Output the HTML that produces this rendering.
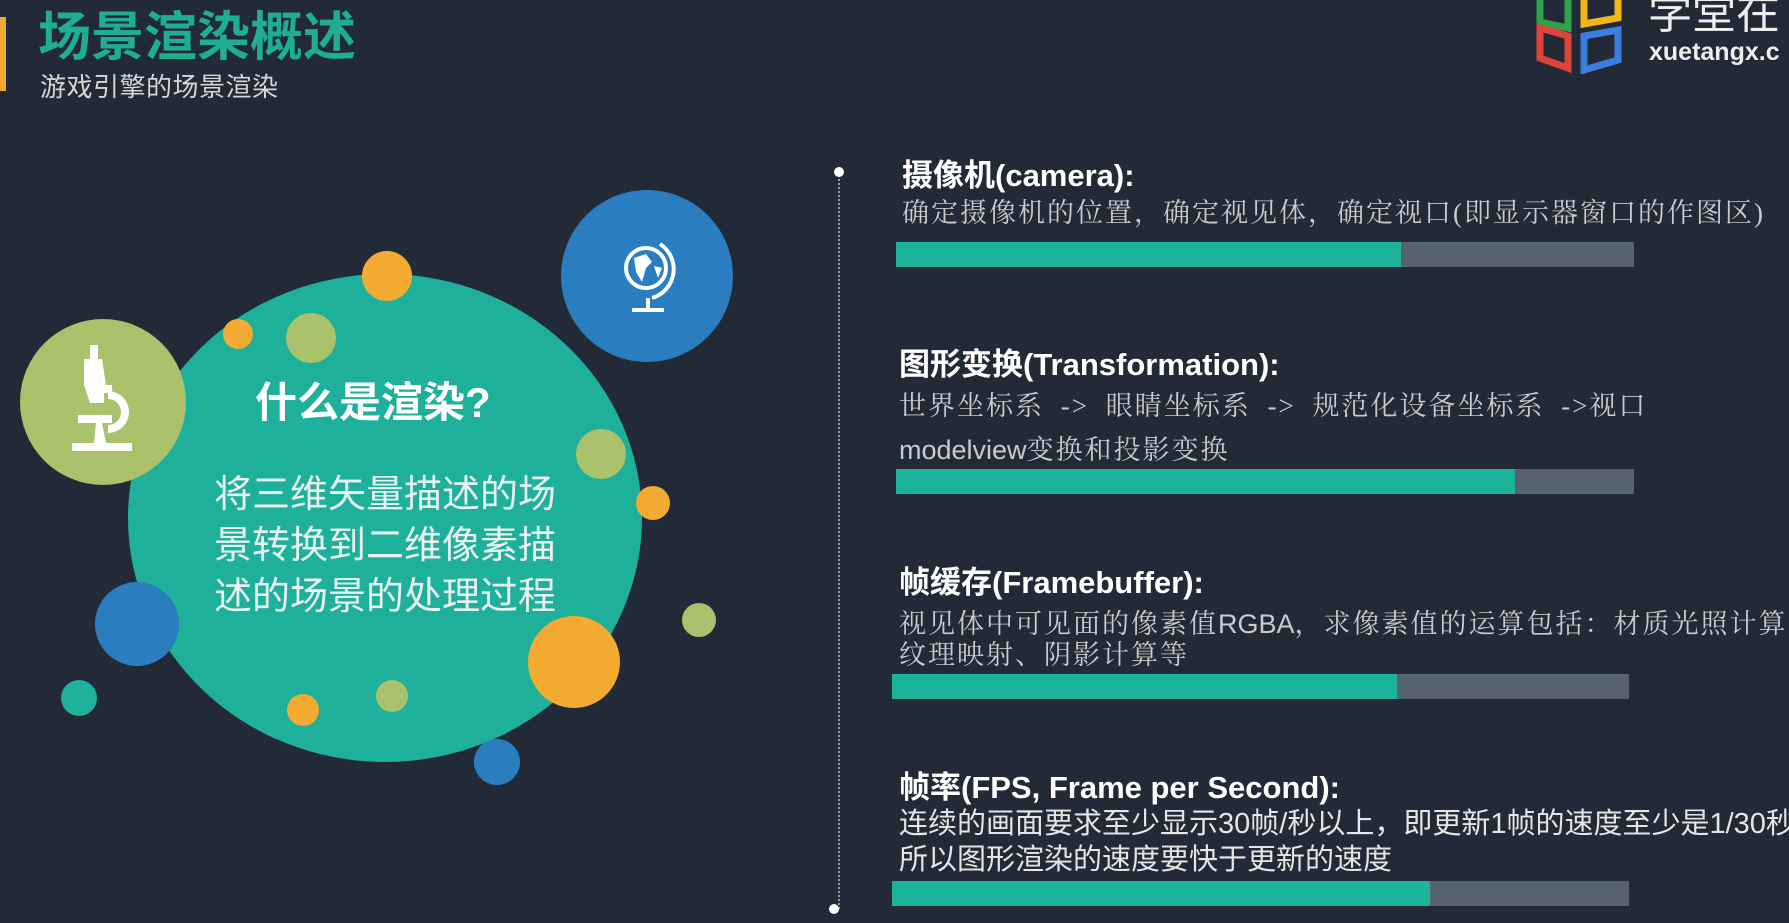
<!DOCTYPE html>
<html><head><meta charset="utf-8"><style>
*{margin:0;padding:0;box-sizing:border-box}
body{width:1789px;height:923px;background:#222a37;overflow:hidden;position:relative;font-family:"Liberation Sans","Noto Sans CJK SC",sans-serif}
.a{position:absolute;white-space:nowrap}
.c{position:absolute;border-radius:50%}
.h{color:#fff;font-weight:bold;font-size:31px;line-height:32px}
.t{color:#c9cbcd;font-family:"Liberation Serif","Noto Serif CJK SC",serif;font-size:27px;line-height:32px;letter-spacing:2px}
.bar{position:absolute;height:25px;background:#56636f}
.bar i{display:block;height:100%;background:#1db39a}
</style></head><body>
<div class="a" style="left:0;top:17px;width:6px;height:74px;background:#f0a92c"></div>
<div class="a" style="left:38px;top:8px;font-size:53px;font-weight:bold;color:#1fae92;line-height:60px">场景渲染概述</div>
<div class="a" style="left:40px;top:72px;font-size:26px;color:#d6d6d6;line-height:30px;letter-spacing:0.5px">游戏引擎的场景渲染</div>

<svg class="a" style="left:1532px;top:0" width="96" height="74" viewBox="0 0 96 74">
<path d="M8 -6 L8 22 L36 28 L36 0" fill="none" stroke="#2da44a" stroke-width="7"/>
<path d="M52 -6 L52 24 L86 18 L86 -8" fill="none" stroke="#f3b619" stroke-width="7"/>
<path d="M8 28 L8 58 L36 68 L36 36 Z" fill="none" stroke="#e0433b" stroke-width="7"/>
<path d="M52 36 L52 70 L86 60 L86 30 Z" fill="none" stroke="#3b7ee0" stroke-width="7"/>
</svg>
<div class="a" style="left:1648px;top:-10px;font-size:44px;color:#eee;line-height:48px">学堂在</div>
<div class="a" style="left:1649px;top:38px;font-size:25px;font-weight:bold;color:#eee;line-height:28px">xuetangx.c</div>

<div class="c" style="left:128px;top:274px;width:514px;height:488px;background:#1eb09a"></div>
<div class="c" style="left:20px;top:319px;width:166px;height:166px;background:#a9c26b"></div>
<div class="c" style="left:561px;top:190px;width:172px;height:172px;background:#2a7ec0"></div>
<div class="c" style="left:362px;top:251px;width:50px;height:50px;background:#f3ab32"></div>
<div class="c" style="left:223px;top:319px;width:30px;height:30px;background:#f3ab32"></div>
<div class="c" style="left:286px;top:313px;width:50px;height:50px;background:#a9c26b"></div>
<div class="c" style="left:576px;top:429px;width:50px;height:50px;background:#a9c26b"></div>
<div class="c" style="left:636px;top:486px;width:34px;height:34px;background:#f3ab32"></div>
<div class="c" style="left:95px;top:582px;width:84px;height:84px;background:#2a7ec0"></div>
<div class="c" style="left:61px;top:680px;width:36px;height:36px;background:#1eb09a"></div>
<div class="c" style="left:287px;top:694px;width:32px;height:32px;background:#f3ab32"></div>
<div class="c" style="left:376px;top:680px;width:32px;height:32px;background:#a9c26b"></div>
<div class="c" style="left:528px;top:616px;width:92px;height:92px;background:#f3ab32"></div>
<div class="c" style="left:682px;top:603px;width:34px;height:34px;background:#a9c26b"></div>
<div class="c" style="left:474px;top:739px;width:46px;height:46px;background:#2a7ec0"></div>

<svg class="a" style="left:68px;top:345px" width="70" height="110" viewBox="0 0 70 110">
<g fill="#fff"><rect x="22" y="0" width="8" height="14"/><path d="M16 14 L34 14 L38 40 L44 40 L44 48 L36 48 L36 58 L22 58 L16 40 Z"/>
<path d="M40 46 A18 18 0 0 1 40 88 L40 80 A10 10 0 0 0 40 54 Z"/>
<path d="M10 70 L44 70 L44 78 L34 78 L38 98 L26 98 L28 78 L10 78 Z"/>
<rect x="4" y="98" width="60" height="8"/></g>
</svg>
<svg class="a" style="left:612px;top:238px" width="72" height="78" viewBox="0 0 72 78">
<g fill="none" stroke="#fff" stroke-width="4"><circle cx="34" cy="30" r="20"/><path d="M48 6 A30 30 0 0 1 40 60"/><path d="M36 60 L36 70 M20 72 L52 72"/></g>
<path d="M22 20 L34 16 L40 24 L34 30 L30 44 L24 34 Z M42 28 L50 30 L46 40 Z" fill="#fff"/>
</svg>

<div class="a" style="left:255px;top:378px;font-size:42px;font-weight:bold;color:#fff;line-height:50px">什么是渲染?</div>
<div class="a" style="left:214px;top:470px;font-size:38px;color:#e8f3f0;line-height:51px">将三维矢量描述的场<br>景转换到二维像素描<br>述的场景的处理过程</div>

<div class="a" style="left:838px;top:171px;height:738px;border-left:2px dotted #9aa0a8"></div>
<div class="c" style="left:834px;top:167px;width:10px;height:10px;background:#fff"></div>
<div class="c" style="left:829px;top:904px;width:10px;height:10px;background:#fff"></div>

<div class="a h" style="left:902px;top:160px">摄像机(camera):</div>
<div class="a t" style="left:902px;top:197px">确定摄像机的位置，确定视见体，确定视口(即显示器窗口的作图区)</div>
<div class="bar" style="left:896px;top:242px;width:738px"><i style="width:505px"></i></div>

<div class="a h" style="left:899px;top:349px">图形变换(Transformation):</div>
<div class="a t" style="left:899px;top:390px;word-spacing:8px">世界坐标系 -&gt; 眼睛坐标系 -&gt; 规范化设备坐标系 -&gt;视口</div>
<div class="a t" style="left:899px;top:434px"><span style="font-family:'Liberation Sans',sans-serif;letter-spacing:0">modelview</span>变换和投影变换</div>
<div class="bar" style="left:896px;top:469px;width:738px"><i style="width:619px"></i></div>

<div class="a h" style="left:899px;top:567px">帧缓存(Framebuffer):</div>
<div class="a t" style="left:899px;top:608px">视见体中可见面的像素值<span style="font-family:'Liberation Sans',sans-serif;letter-spacing:0">RGBA</span>，求像素值的运算包括：材质光照计算</div>
<div class="a t" style="left:899px;top:639px">纹理映射、阴影计算等</div>
<div class="bar" style="left:892px;top:674px;width:737px"><i style="width:505px"></i></div>

<div class="a h" style="left:899px;top:772px">帧率(FPS, Frame per Second):</div>
<div class="a" style="left:899px;top:808px;font-size:29px;color:#e6e6e6;line-height:32px">连续的画面要求至少显示30帧/秒以上，即更新1帧的速度至少是1/30秒</div>
<div class="a" style="left:899px;top:844px;font-size:29px;color:#e6e6e6;line-height:32px">所以图形渲染的速度要快于更新的速度</div>
<div class="bar" style="left:892px;top:881px;width:737px"><i style="width:538px"></i></div>
</body></html>
